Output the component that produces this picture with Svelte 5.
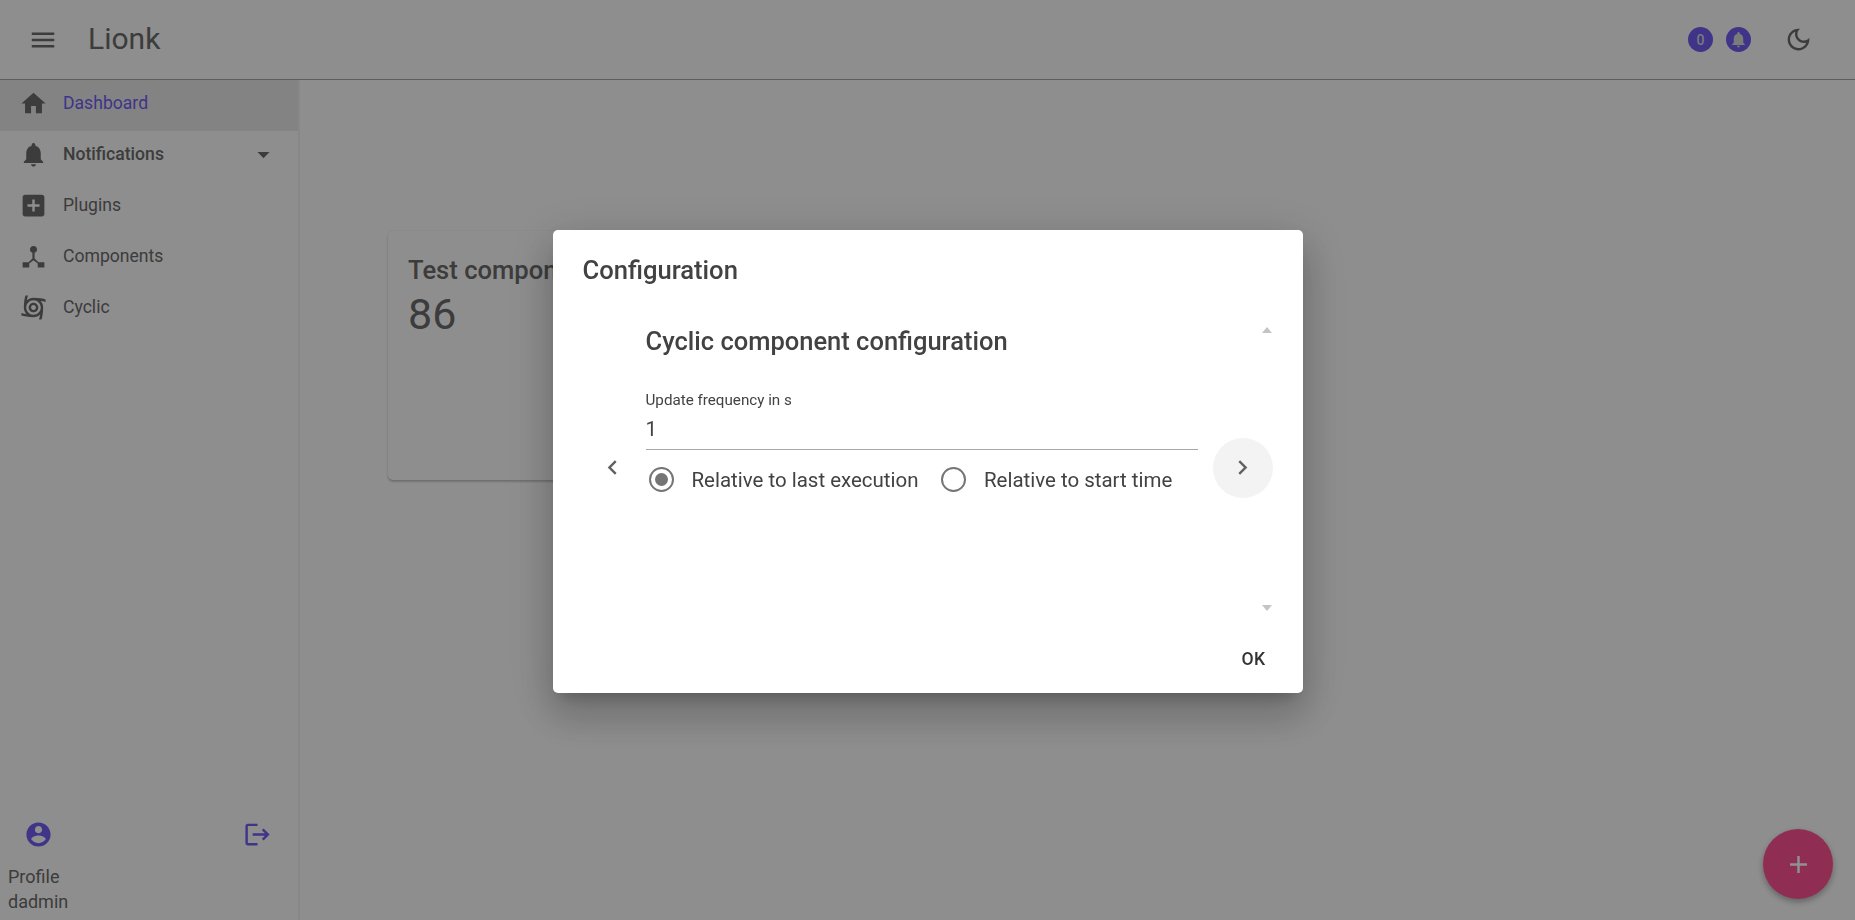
<script>
    const paths = {
        menu: 'M3 18h18v-2H3v2zm0-5h18v-2H3v2zm0-7v2h18V6H3z',
        home: 'M10 20v-6h4v6h5v-8h3L12 3 2 12h3v8z',
        bell: 'M12 22c1.1 0 2-.9 2-2h-4c0 1.1.89 2 2 2zm6-6v-5c0-3.07-1.64-5.64-4.5-6.32V4c0-.83-.67-1.5-1.5-1.5s-1.5.67-1.5 1.5v.68C7.63 5.36 6 7.92 6 11v5l-2 2v1h16v-1l-2-2z',
        addBox: 'M19 3H5c-1.11 0-2 .9-2 2v14c0 1.1.89 2 2 2h14c1.1 0 2-.9 2-2V5c0-1.1-.9-2-2-2zm-2 10h-4v4h-2v-4H7v-2h4V7h2v4h4v2z',
        graph: 'M12 3.3a2.9 2.9 0 0 1 .9 5.66V13.6l3.2 3.1H21V21h-5.5v-3.2L12 15.1l-3.5 2.7V21H3v-4.3h4.9l3.2-3.1V8.96A2.9 2.9 0 0 1 12 3.3z',
        cyclone: 'M12 8c-2.21 0-4 1.79-4 4s1.79 4 4 4 4-1.79 4-4-1.79-4-4-4zm0 6c-1.1 0-2-.9-2-2s.9-2 2-2 2 .9 2 2-.9 2-2 2zM22 7.47V5.35C20.05 4.77 16.56 4 12 4c-2.15 0-4.11.86-5.54 2.24.13-.85.4-2.4 1.01-4.24H5.35C4.77 3.95 4 7.44 4 12c0 2.15.86 4.11 2.24 5.54-.85-.14-2.4-.4-4.24-1.01v2.12C3.95 19.23 7.44 20 12 20c2.15 0 4.11-.86 5.54-2.24-.14.85-.4 2.4-1.01 4.24h2.12c.58-1.95 1.35-5.44 1.35-10 0-2.15-.86-4.11-2.24-5.54.85.14 2.4.41 4.24 1.01zM12 18c-3.31 0-6-2.69-6-6s2.69-6 6-6 6 2.69 6 6-2.69 6-6 6z',
        dropdown: 'M7 10l5 5 5-5z',
        moon: 'M9.37 5.51c-.18.64-.27 1.31-.27 1.99 0 4.08 3.32 7.4 7.4 7.4.68 0 1.35-.09 1.99-.27C17.45 17.19 14.93 19 12 19c-3.86 0-7-3.14-7-7 0-2.93 1.81-5.45 4.37-6.49zM12 3c-4.97 0-9 4.03-9 9s4.03 9 9 9 9-4.03 9-9c0-.46-.04-.92-.1-1.36-.98 1.37-2.58 2.26-4.4 2.26-2.98 0-5.4-2.42-5.4-5.4 0-1.81.89-3.42 2.26-4.4-.44-.06-.9-.1-1.36-.1z',
        account: 'M12 2C6.48 2 2 6.48 2 12s4.48 10 10 10 10-4.48 10-10S17.52 2 12 2zm0 3c1.66 0 3 1.34 3 3s-1.34 3-3 3-3-1.34-3-3 1.34-3 3-3zm0 14.2c-2.5 0-4.71-1.28-6-3.22.03-1.99 4-3.08 6-3.08 1.99 0 5.97 1.09 6 3.08-1.29 1.94-3.5 3.22-6 3.22z',
        logout: 'M17 7l-1.41 1.41L18.17 11H8v2h10.17l-2.58 2.58L17 17l5-5zM4 5h8V3H4c-1.1 0-2 .9-2 2v14c0 1.1.9 2 2 2h8v-2H4V5z',
        prev: 'M15.41 7.41 14 6l-6 6 6 6 1.41-1.41L10.83 12z',
        next: 'M10 6 8.59 7.41 13.17 12l-4.58 4.59L10 18l6-6z',
        add: 'M19 13h-6v6h-2v-6H5v-2h6V5h2v6h6v2z'
    };

    const navItems = [
        { label: 'Dashboard', icon: 'home', selected: true },
        { label: 'Notifications', icon: 'bell', bold: true, caret: true },
        { label: 'Plugins', icon: 'addBox' },
        { label: 'Components', icon: 'graph' },
        { label: 'Cyclic', icon: 'cyclone' }
    ];
</script>

{#snippet icon(name, cls)}
    <svg class={cls} viewBox="0 0 24 24" aria-hidden="true"><path d={paths[name]} /></svg>
{/snippet}

<div class="page">
    <header class="appbar">
        {@render icon('menu', 'menu-icon')}
        <h1 class="brand">Lionk</h1>
        <div class="appbar-right">
            <span class="badge">0</span>
            <span class="badge">{@render icon('bell', 'badge-icon')}</span>
            {@render icon('moon', 'moon-icon')}
        </div>
    </header>

    <div class="body-row">
        <nav class="sidebar">
            <ul class="nav">
                {#each navItems as item}
                    <li class="nav-item" class:selected={item.selected} class:bold={item.bold}>
                        {@render icon(item.icon, 'nav-icon')}
                        <span class="nav-label">{item.label}</span>
                        {#if item.caret}
                            {@render icon('dropdown', 'caret')}
                        {/if}
                    </li>
                {/each}
            </ul>
            <div class="profile">
                <div class="profile-icons">
                    {@render icon('account', 'profile-icon')}
                    {@render icon('logout', 'profile-icon')}
                </div>
                <div class="profile-text">Profile<br />dadmin</div>
            </div>
        </nav>

        <main class="content">
            <section class="card">
                <div class="card-title">Test component</div>
                <div class="card-value">86</div>
            </section>
        </main>
    </div>

    <button class="fab">{@render icon('add', 'fab-icon')}</button>
</div>

<div class="backdrop">
    <div class="dialog">
        <h2 class="dialog-title">Configuration</h2>
        <div class="dialog-body">
            <span class="scroll-arrow up"></span>
            <span class="scroll-arrow down"></span>
            <button class="step-prev">{@render icon('prev', 'step-icon')}</button>
            <div class="form">
                <h3 class="form-title">Cyclic component configuration</h3>
                <label class="field">
                    <span class="field-label">Update frequency in s</span>
                    <span class="field-value">1</span>
                </label>
                <div class="radios">
                    <div class="radio-option">
                        <span class="radio checked"></span>
                        <span>Relative to last execution</span>
                    </div>
                    <div class="radio-option">
                        <span class="radio"></span>
                        <span>Relative to start time</span>
                    </div>
                </div>
            </div>
            <button class="step-next">{@render icon('next', 'step-icon')}</button>
        </div>
        <div class="dialog-actions">
            <button class="ok">OK</button>
        </div>
    </div>
</div>

<style>
    :global(body) {
        margin: 0;
        overflow: hidden;
        font-family: Roboto, "Liberation Sans", sans-serif;
        background: #fafafa;
    }
    h1, h2, h3, ul {
        margin: 0;
        padding: 0;
    }
    button {
        border: 0;
        background: none;
        padding: 0;
        font-family: inherit;
    }
    svg {
        display: block;
        fill: currentColor;
    }
    .page {
        height: 920px;
        display: flex;
        flex-direction: column;
        color: #6a6a6a;
    }
    .appbar {
        height: 79px;
        flex: none;
        display: flex;
        align-items: center;
        padding: 0 42px 0 28px;
        background: #fafafa;
        border-bottom: 1px solid #a6a6a6;
    }
    :global(.menu-icon) {
        width: 30px;
        height: 30px;
    }
    .brand {
        margin-left: 30px;
        margin-bottom: 2px;
        font-size: 30px;
        font-weight: 400;
    }
    .appbar-right {
        margin-left: auto;
        display: flex;
        align-items: center;
        gap: 13px;
    }
    .badge {
        width: 25px;
        height: 25px;
        border-radius: 50%;
        background: #6f5cf0;
        color: #d8d8d8;
        display: flex;
        align-items: center;
        justify-content: center;
        font-size: 14px;
        font-weight: 500;
    }
    :global(.badge-icon) {
        width: 19px;
        height: 19px;
    }
    :global(.moon-icon) {
        width: 29px;
        height: 29px;
        margin-left: 20px;
    }
    .body-row {
        flex: 1;
        display: flex;
        min-height: 0;
    }
    .sidebar {
        width: 298px;
        flex: none;
        display: flex;
        flex-direction: column;
        justify-content: space-between;
        border-right: 2px solid #f0f0f0;
    }
    .nav {
        list-style: none;
    }
    .nav-item {
        height: 51px;
        box-sizing: border-box;
        display: flex;
        align-items: center;
        padding: 0 20px 5px 19px;
        font-size: 17.6px;
    }
    .nav-item.selected {
        background: #e6e6e6;
        color: #6f5cf0;
    }
    .nav-item.selected :global(.nav-icon) {
        color: #6a6a6a;
    }
    .nav-item.bold {
        font-weight: 500;
    }
    :global(.nav-icon) {
        width: 29px;
        height: 29px;
        flex: none;
    }
    .nav-label {
        margin-left: 15px;
    }
    :global(.caret) {
        width: 29px;
        height: 29px;
        margin-left: auto;
    }
    .profile {
        padding-bottom: 6px;
    }
    .profile-icons {
        display: flex;
        justify-content: space-between;
        color: #6f5cf0;
        padding: 0 26px 0 24px;
    }
    :global(.profile-icon) {
        width: 29px;
        height: 29px;
    }
    .profile-text {
        margin-top: 15px;
        padding-left: 8px;
        font-size: 18px;
        line-height: 25px;
    }
    .content {
        flex: 1;
        padding: 151px 0 0 88px;
    }
    .card {
        width: 640px;
        height: 249px;
        box-sizing: border-box;
        padding: 24px 20px;
        background: #fafafa;
        border-radius: 5px;
        box-shadow: 0 2px 2px rgba(0, 0, 0, 0.2), 0 0 2px rgba(0, 0, 0, 0.1);
    }
    .card-title {
        font-size: 25.6px;
        font-weight: 500;
        white-space: nowrap;
    }
    .card-value {
        font-size: 43px;
        line-height: 58px;
    }
    .fab {
        position: fixed;
        right: 22px;
        bottom: 21px;
        width: 70px;
        height: 70px;
        border-radius: 50%;
        background: #fb5290;
        color: #fff;
        display: flex;
        align-items: center;
        justify-content: center;
        box-shadow: 0 3px 6px rgba(0, 0, 0, 0.3);
    }
    :global(.fab-icon) {
        width: 29px;
        height: 29px;
    }
    .backdrop {
        position: fixed;
        inset: 0;
        display: flex;
        align-items: center;
        justify-content: center;
        background: rgba(0, 0, 0, 0.43);
    }
    .dialog {
        position: relative;
        width: 750px;
        height: 463px;
        margin-top: 3px;
        display: flex;
        flex-direction: column;
        background: #fff;
        border-radius: 5px;
        color: #424242;
        box-shadow: 0 11px 15px -7px rgba(0, 0, 0, 0.2), 0 24px 38px 3px rgba(0, 0, 0, 0.14), 0 9px 46px 8px rgba(0, 0, 0, 0.12);
    }
    .dialog-title {
        padding: 24px 30px 0;
        font-size: 25.6px;
        font-weight: 500;
        line-height: 32px;
    }
    .dialog-body {
        position: relative;
        flex: 1;
        display: flex;
        align-items: center;
        margin-top: 36px;
    }
    .scroll-arrow {
        position: absolute;
        right: 31px;
        width: 0;
        height: 0;
        border-left: 5px solid transparent;
        border-right: 5px solid transparent;
    }
    .scroll-arrow.up {
        top: 5px;
        border-bottom: 6px solid #c4c4c4;
    }
    .scroll-arrow.down {
        bottom: 2px;
        border-top: 6px solid #c4c4c4;
    }
    .step-prev, .step-next {
        flex: none;
        width: 60px;
        height: 60px;
        display: flex;
        align-items: center;
        justify-content: center;
        border-radius: 50%;
        color: #616161;
    }
    .step-prev {
        margin-left: 30px;
    }
    .step-next {
        margin-left: 15px;
        background: #f3f3f3;
    }
    :global(.step-icon) {
        width: 29px;
        height: 29px;
    }
    .form {
        width: 552px;
        margin-left: 3px;
        align-self: flex-start;
    }
    .form-title {
        font-size: 25.5px;
        font-weight: 500;
        line-height: 32px;
        margin-top: 3px;
        white-space: nowrap;
    }
    .field {
        display: flex;
        flex-direction: column;
        margin-top: 33px;
        border-bottom: 1px solid #a8a8a8;
        padding-bottom: 5px;
    }
    .field-label {
        font-size: 15.2px;
        line-height: 20px;
    }
    .field-value {
        font-size: 20.48px;
        line-height: 30px;
        margin-top: 4px;
    }
    .radios {
        display: flex;
        gap: 23px;
        margin-top: 17px;
        padding-left: 3.5px;
        font-size: 20.48px;
    }
    .radio-option {
        display: flex;
        align-items: center;
        gap: 17.5px;
    }
    .radio {
        position: relative;
        width: 25px;
        height: 25px;
        box-sizing: border-box;
        border: 2.4px solid #757575;
        border-radius: 50%;
    }
    .radio.checked::after {
        content: '';
        position: absolute;
        inset: 3.6px;
        border-radius: 50%;
        background: #757575;
    }
    .dialog-actions {
        display: flex;
        justify-content: flex-end;
        padding: 0 37px 24px;
        margin-top: 36px;
    }
    .ok {
        font-size: 17.6px;
        font-weight: 500;
        color: #333;
        letter-spacing: 0.4px;
    }
</style>
